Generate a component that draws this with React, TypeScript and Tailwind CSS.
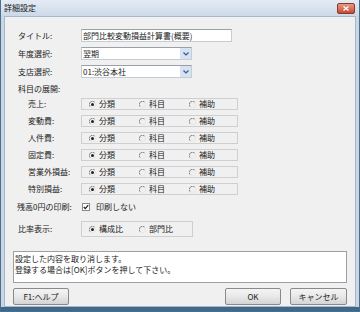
const font = { fontFamily: '"Noto Sans CJK JP", "Liberation Sans", sans-serif' }

function Radio({ checked }: { checked?: boolean }) {
  return (
    <svg width="7" height="7" viewBox="0 0 7 7" className="shrink-0">
      <path d="M5.8 1.2 A3 3 0 0 0 1.2 5.8" fill="none" stroke="#8a8a8a" strokeWidth="1" />
      <path d="M1.2 5.8 A3 3 0 0 0 5.8 1.2" fill="none" stroke="#e6e6e6" strokeWidth="1" />
      {checked && <circle cx="3.5" cy="3.5" r="1.5" fill="#222" />}
    </svg>
  )
}

function Opt({ label, checked, w }: { label: string; checked?: boolean; w: string }) {
  return (
    <div className={`flex items-center gap-[3px] pl-[7px] ${w}`}>
      <Radio checked={checked} />
      <span>{label}</span>
    </div>
  )
}

function Select({ value }: { value: string }) {
  return (
    <div className="flex h-[13px] w-[111px] items-stretch border border-[#c6ccd4] border-t-[#9aa0a8] bg-white">
      <span className="flex-1 pl-[1px] leading-[11px]">{value}</span>
      <div className="flex w-[11px] items-center justify-center bg-[#d7e3f3]">
        <svg width="6" height="4" viewBox="0 0 6 4">
          <path d="M0.5 0.5 L3 3 L5.5 0.5" fill="none" stroke="#3c5a8a" strokeWidth="1.2" />
        </svg>
      </div>
    </div>
  )
}

function Btn({ label, w }: { label: string; w: string }) {
  return (
    <div
      className={`flex h-[17px] ${w} items-center justify-center rounded-[2px] border border-[#8a8a8a] bg-gradient-to-b from-[#f4f4f4] via-[#e8e8e8] to-[#d4d4d4]`}
    >
      {label}
    </div>
  )
}

const rows = [
  '売上:',
  '変動費:',
  '人件費:',
  '固定費:',
  '営業外損益:',
  '特別損益:',
]

export default function App() {
  return (
    <div
      style={font}
      className="flex h-[312px] w-[360px] flex-col overflow-hidden border-x border-b border-[#4a6f8c] bg-[#c8d6e6] text-[8px] text-[#222]"
    >
      {/* Title bar */}
      <div className="flex h-[16px] shrink-0 items-center justify-between bg-gradient-to-b from-[#e4ebf4] to-[#ccd9e9] pl-[3px] pr-[4px]">
        <span className="text-[8px] text-[#1a1a1a]">詳細設定</span>
        <div className="flex h-[11px] w-[18px] items-center justify-center rounded-[2px] border border-[#8a3a2c] bg-gradient-to-b from-[#e59a88] to-[#c8472f]">
          <svg width="6" height="5" viewBox="0 0 6 5">
            <path d="M0.5 0.5 L5.5 4.5 M5.5 0.5 L0.5 4.5" stroke="#fff" strokeWidth="1.3" />
          </svg>
        </div>
      </div>

      {/* Client area */}
      <div className="mx-[3px] flex flex-1 flex-col border border-[#a9b8c9] bg-[#f0f0f0]">
        <div className="mt-[12px] flex h-[13px] items-center">
          <span className="w-[76px] pl-[13px]">タイトル:</span>
          <div className="h-[13px] w-[151px] border border-[#c6ccd4] border-t-[#9aa0a8] bg-white pl-[1px] leading-[11px]">
            部門比較変動損益計算書(概要)
          </div>
        </div>
        <div className="mt-[5px] flex h-[13px] items-center">
          <span className="w-[76px] pl-[13px]">年度選択:</span>
          <Select value="翌期" />
        </div>
        <div className="mt-[5px] flex h-[13px] items-center">
          <span className="w-[76px] pl-[13px]">支店選択:</span>
          <Select value="01:渋谷本社" />
        </div>
        <div className="mt-[5px] flex h-[12px] items-center pl-[13px]">科目の展開:</div>

        <div className="mt-[3px] flex flex-col gap-[5px]">
          {rows.map((r) => (
            <div key={r} className="flex h-[12px] items-center">
              <span className="w-[76px] pl-[23px]">{r}</span>
              <div className="flex h-[12px] w-[157px] items-center border border-[#cfcfcf]">
                <Opt label="分類" checked w="w-[50px]" />
                <Opt label="科目" w="w-[50px]" />
                <Opt label="補助" w="w-[55px]" />
              </div>
            </div>
          ))}
        </div>

        <div className="mt-[6px] flex h-[12px] items-center">
          <span className="w-[77px] pl-[12px]">残高0円の印刷:</span>
          <div className="flex items-center gap-[6px]">
            <svg width="8" height="8" viewBox="0 0 8 8" className="shrink-0">
              <rect x="0.5" y="0.5" width="7" height="7" fill="#fff" stroke="#8a8a8a" />
              <path d="M1.8 4 L3.3 5.6 L6.2 2.2" fill="none" stroke="#222" strokeWidth="1.3" />
            </svg>
            <span>印刷しない</span>
          </div>
        </div>

        <div className="mt-[8px] flex h-[16px] items-center">
          <span className="w-[76px] pl-[13px]">比率表示:</span>
          <div className="flex h-[16px] w-[112px] items-center border border-[#cfcfcf]">
            <Opt label="構成比" checked w="w-[50px]" />
            <Opt label="部門比" w="w-[60px]" />
          </div>
        </div>

        <div className="mx-[8px] mt-[14px] h-[32px] border border-[#9aa0a8] bg-white pl-[1px] pt-[1px] leading-[11px]">
          設定した内容を取り消します。
          <br />
          登録する場合は[OK]ボタンを押して下さい。
        </div>

        <div className="mx-[8px] mt-[5px] flex items-center">
          <Btn label="F1:ヘルプ" w="w-[56px]" />
          <div className="flex-1" />
          <Btn label="OK" w="w-[56px]" />
          <div className="w-[9px]" />
          <Btn label="キャンセル" w="w-[57px]" />
        </div>
      </div>
      <div className="h-[4px] shrink-0 bg-[#3d6a8a]" />
    </div>
  )
}
